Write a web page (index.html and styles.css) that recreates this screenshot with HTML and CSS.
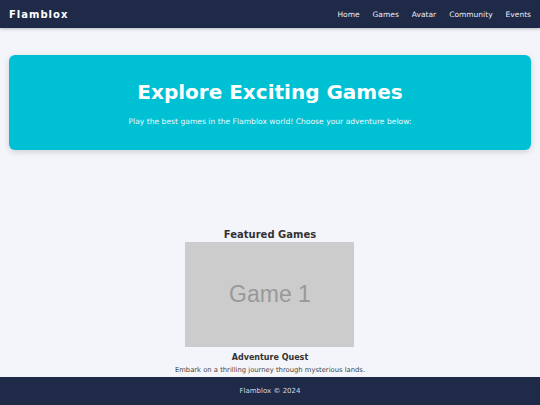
FILE: index.html
```
<!DOCTYPE html>
<html lang="en">
<head>
<meta charset="utf-8">
<title>Flamblox - Games</title>
<link rel="stylesheet" href="styles.css">
</head>
<body>
<header class="topbar">
  <div class="logo">Flamblox</div>
  <nav class="nav">
    <a href="#">Home</a>
    <a href="#">Games</a>
    <a href="#">Avatar</a>
    <a href="#">Community</a>
    <a href="#">Events</a>
  </nav>
</header>
<main class="main">
  <section class="hero">
    <h1 class="hero-title">Explore Exciting Games</h1>
    <p class="hero-sub">Play the best games in the Flamblox world! Choose your adventure below:</p>
  </section>
  <section class="featured">
    <h2 class="featured-title">Featured Games</h2>
    <div class="card">
      <div class="thumb">Game 1</div>
      <h3 class="card-title">Adventure Quest</h3>
      <p class="card-desc">Embark on a thrilling journey through mysterious lands.</p>
    </div>
  </section>
</main>
<footer class="footer">Flamblox © 2024</footer>
</body>
</html>
```
FILE: styles.css
```
html, body {
  margin: 0;
  padding: 0;
}
body {
  background: #f4f5fa;
  font-family: "DejaVu Sans", Verdana, sans-serif;
  color: #333;
  height: 405px;
  overflow: hidden;
}
.topbar {
  height: 28px;
  background: #1f2a48;
  display: flex;
  align-items: center;
  justify-content: space-between;
  padding: 0 9px;
  box-shadow: 0 1px 3px rgba(0,0,0,0.25);
}
.logo {
  color: #fff;
  font-weight: bold;
  font-size: 10px;
  letter-spacing: 1px;
}
.nav {
  display: flex;
  gap: 13px;
}
.nav a {
  color: #e8ebf3;
  text-decoration: none;
  font-size: 7.5px;
}
.main {
  padding: 27px 9px 0;
}
.hero {
  background: #00c0d4;
  border-radius: 6px;
  height: 95px;
  box-shadow: 0 2px 6px rgba(0,0,0,0.15);
  display: flex;
  flex-direction: column;
  align-items: center;
  color: #fff;
}
.hero-title {
  margin: 23px 0 0;
  font-size: 20px;
  line-height: 28px;
}
.hero-sub {
  margin: 11px 0 0;
  font-size: 7.6px;
  color: #e6fafc;
}
.featured {
  margin-top: 78px;
  display: flex;
  flex-direction: column;
  align-items: center;
}
.featured-title {
  margin: 0;
  font-size: 10px;
  line-height: 14px;
  color: #333;
}
.card {
  display: flex;
  flex-direction: column;
  align-items: center;
}
.thumb {
  width: 169px;
  height: 105px;
  background: #cccccc;
  color: #999999;
  font-family: "Liberation Sans", Arial, sans-serif;
  font-size: 23px;
  display: flex;
  align-items: center;
  justify-content: center;
}
.card-title {
  margin: 5px 0 0;
  font-size: 8px;
  line-height: 12px;
  color: #333;
}
.card-desc {
  margin: 2px 0 0;
  font-size: 6.8px;
  color: #444;
}
.footer {
  position: fixed;
  left: 0;
  right: 0;
  bottom: 0;
  height: 28px;
  background: #1f2a48;
  color: #d6dae6;
  font-size: 7px;
  display: flex;
  align-items: center;
  justify-content: center;
}
```
